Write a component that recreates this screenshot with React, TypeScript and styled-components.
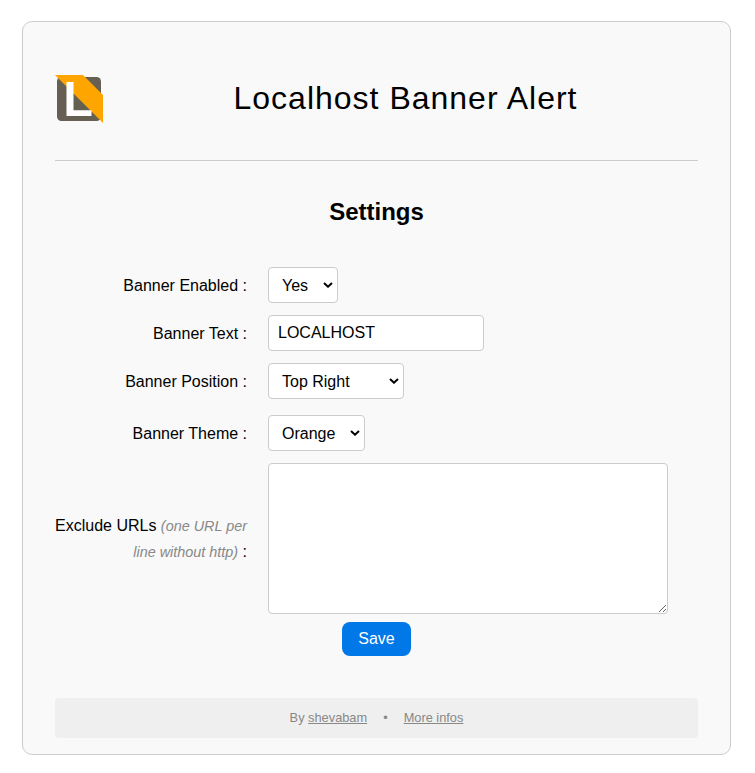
import React from "react";
import styled, { createGlobalStyle } from "styled-components";

const GlobalStyle = createGlobalStyle`
  body {
    margin: 0;
    background: #fff;
    color: #000;
    font-family: "Liberation Sans", Arial, sans-serif;
    font-size: 16px;
    line-height: 26px;
  }
  *, *::before, *::after { box-sizing: border-box; }
`;

const Card = styled.main`
  width: 709px;
  height: 734px;
  margin: 21px 0 0 22px;
  padding: 0 32px 16px;
  display: flex;
  flex-direction: column;
  background: #f9f9f9;
  border: 1px solid #ccc;
  border-radius: 10px;
`;

const Header = styled.header`
  display: flex;
  align-items: center;
  height: 139px;
  padding-top: 16px;
  border-bottom: 1px solid #ccc;
`;

const Logo = styled.svg`
  flex: none;
  width: 48px;
  height: 48px;
  margin-bottom: 1px;
`;

const Title = styled.h1`
  flex: 1;
  margin: 0;
  padding: 0 0 2px 10px;
  text-align: center;
  font-size: 32px;
  font-weight: 400;
  letter-spacing: 1px;
  line-height: 52px;
`;

const Heading = styled.h2`
  margin: 31px 0 36px;
  text-align: center;
  font-size: 24px;
  line-height: 39px;
`;

const Form = styled.form`
  display: flex;
  flex-direction: column;
`;

const Row = styled.div<{ $gap?: number }>`
  display: grid;
  grid-template-columns: 193px 1fr;
  column-gap: 20px;
  align-items: center;
  justify-items: start;
  margin-bottom: ${(p) => p.$gap ?? 12}px;
`;

const Label = styled.label`
  justify-self: end;
  padding: 2px 1px 0 0;
  text-align: right;
`;

const WideLabel = styled(Label)`
  padding: 0 1px 0 0;
`;

const Hint = styled.em`
  color: #888;
  font-size: 14.4px;
`;

const SelectBox = styled.div<{ $width: number }>`
  display: grid;
  align-items: center;
  width: ${(p) => p.$width}px;
  height: 36px;
`;

const Select = styled.select`
  grid-area: 1 / 1;
  width: 100%;
  height: 36px;
  padding: 5px 13px;
  appearance: none;
  font: 16px "Liberation Sans", Arial, sans-serif;
  color: #000;
  background: #fff;
  border: 1px solid #ccc;
  border-radius: 4px;
`;

const Chevron = styled.svg`
  grid-area: 1 / 1;
  justify-self: end;
  width: 10px;
  height: 6px;
  margin-right: 5px;
  pointer-events: none;
`;

const Input = styled.input`
  width: 216px;
  height: 36px;
  padding: 5px 9px;
  font: 16px "Liberation Sans", Arial, sans-serif;
  color: #000;
  background: #fff;
  border: 1px solid #ccc;
  border-radius: 4px;
`;

const TextArea = styled.textarea`
  display: block;
  width: 400px;
  height: 151px;
  padding: 9px;
  font: 16px "Liberation Sans", Arial, sans-serif;
  background: #fff;
  border: 1px solid #ccc;
  border-radius: 4px;
`;

const SaveButton = styled.button`
  align-self: center;
  width: 69px;
  height: 34px;
  padding: 0;
  font: 16px "Liberation Sans", Arial, sans-serif;
  color: #fff;
  background: #0078e7;
  border: 0;
  border-radius: 8px;
`;

const Footer = styled.footer`
  display: flex;
  align-items: center;
  justify-content: center;
  height: 40px;
  margin-top: auto;
  color: #888;
  background: #efefef;
  border-radius: 4px;
  font-size: 12.8px;
`;

const Bullet = styled.span`
  margin: 0 16px;
`;

const Link = styled.a`
  color: #888;
`;

function Dropdown({ id, width, options }: { id: string; width: number; options: string[] }) {
  return (
    <SelectBox $width={width}>
      <Select id={id}>
        {options.map((o) => (
          <option key={o}>{o}</option>
        ))}
      </Select>
      <Chevron viewBox="0 0 10 6" aria-hidden="true">
        <path d="M1 1L5 4.7L9 1" fill="none" stroke="#000" strokeWidth="2" />
      </Chevron>
    </SelectBox>
  );
}

export default function App() {
  return (
    <>
      <GlobalStyle />
      <Card>
        <Header>
          <Logo viewBox="0 0 48 48" aria-hidden="true">
            <rect x="2" y="2" width="44" height="44" rx="4.5" fill="#666052" />
            <path d="M0 0H28L48 20V48Z" fill="#ffa500" />
            <path d="M11.5 7H18.5V35.2H36.5V41H11.5Z" fill="#fff" />
          </Logo>
          <Title>Localhost Banner Alert</Title>
        </Header>
        <Heading>Settings</Heading>
        <Form onSubmit={(e) => e.preventDefault()}>
          <Row>
            <Label htmlFor="enabled">Banner Enabled :</Label>
            <Dropdown id="enabled" width={70} options={["Yes", "No"]} />
          </Row>
          <Row>
            <Label htmlFor="text">Banner Text :</Label>
            <Input id="text" defaultValue="LOCALHOST" />
          </Row>
          <Row $gap={16}>
            <Label htmlFor="position">Banner Position :</Label>
            <Dropdown id="position" width={136} options={["Top Right", "Top Left"]} />
          </Row>
          <Row>
            <Label htmlFor="theme">Banner Theme :</Label>
            <Dropdown id="theme" width={97} options={["Orange"]} />
          </Row>
          <Row $gap={8}>
            <WideLabel htmlFor="exclude">
              Exclude URLs <Hint>(one URL per line without http)</Hint> :
            </WideLabel>
            <TextArea id="exclude" />
          </Row>
          <SaveButton type="submit">Save</SaveButton>
        </Form>
        <Footer>
          <span>
            By <Link href="#">shevabam</Link>
          </span>
          <Bullet>•</Bullet>
          <Link href="#">More infos</Link>
        </Footer>
      </Card>
    </>
  );
}
